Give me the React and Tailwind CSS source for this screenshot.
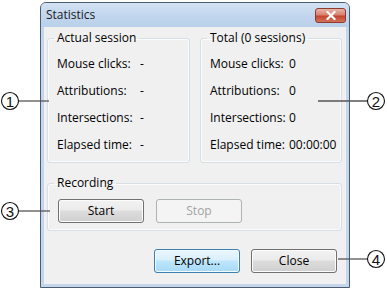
import React from "react";

const btn =
  "w-[86px] h-[24px] rounded-[3px] border text-[12px] leading-none flex items-center justify-center";
const normalBtn =
  "border-[#707070] text-black bg-[linear-gradient(to_bottom,#f2f2f2_0%,#ebebeb_45%,#dddddd_50%,#cfcfcf_100%)] shadow-[inset_0_0_0_1px_#fcfcfc]";

function Group({ title, rows, width, valueCol }) {
  return (
    <fieldset
      className={`${width} border border-[#d5dfe5] rounded-[3px] shadow-[inset_0_0_0_1px_#fafbfc] pl-[9px] pb-[4px]`}
    >
      <legend className="-ml-[3px] px-[3px] leading-[16px] text-black">{title}</legend>
      <div className="pt-[4px] flex flex-col">
        {rows.map(([label, value]) => (
          <div key={label} className="h-[27px] flex items-center">
            <span className={valueCol}>{label}</span>
            <span>{value}</span>
          </div>
        ))}
      </div>
    </fieldset>
  );
}

export default function App() {
  return (
    <div className="relative w-[387px] h-[288px] bg-white overflow-hidden text-[12px] text-black font-['Segoe_UI','Open_Sans',sans-serif]">
      {/* Dialog window */}
      <div className="ml-[40px] mt-[2px] w-[310px] h-[286px] flex flex-col border border-[#4c5c70] rounded-t-[6px] bg-[#c4d6eb]">
        <div className="h-[24px] flex items-center justify-between pl-[5px] pr-[3px] rounded-t-[5px] bg-[linear-gradient(to_bottom,#d3e2f3_0%,#c2d6ed_50%,#b9d0ea_100%)]">
          <span className="text-[12px] text-[#1b1b1b]">Statistics</span>
          <div className="w-[31px] h-[15px] rounded-[3px] border border-[#8d3b2f] bg-[linear-gradient(to_bottom,#e9b3a8_0%,#d9816f_45%,#c4452f_55%,#d4735c_100%)] flex items-center justify-center">
            <svg width="10" height="9" viewBox="0 0 10 9">
              <path d="M1.5 1 L8.5 8 M8.5 1 L1.5 8" stroke="#ffffff" strokeWidth="2.2" strokeLinecap="square" />
            </svg>
          </div>
        </div>

        <div className="flex-1 mx-[3px] mb-[3px] bg-[#f0f0f0] flex flex-col">
          <div className="flex gap-[10px] pl-[3px] pt-[3px]">
            <Group
              title="Actual session"
              width="w-[143px]"
              valueCol="w-[83px]"
              rows={[
                ["Mouse clicks:", "-"],
                ["Attributions:", "-"],
                ["Intersections:", "-"],
                ["Elapsed time:", "-"],
              ]}
            />
            <Group
              title="Total (0 sessions)"
              width="w-[142px]"
              valueCol="w-[79px]"
              rows={[
                ["Mouse clicks:", "0"],
                ["Attributions:", "0"],
                ["Intersections:", "0"],
                ["Elapsed time:", "00:00:00"],
              ]}
            />
          </div>

          <fieldset className="ml-[3px] mt-[12px] w-[295px] border border-[#d5dfe5] rounded-[3px] shadow-[inset_0_0_0_1px_#fafbfc] pl-[10px] pt-[8px] pb-[7px]">
            <legend className="-ml-[4px] px-[3px] leading-[16px]">Recording</legend>
            <div className="flex gap-[12px]">
              <button className={`${btn} ${normalBtn}`}>Start</button>
              <button className={`${btn} border-[#adb2b5] text-[#a3a3a3] bg-[#f4f4f4]`} disabled>
                Stop
              </button>
            </div>
          </fieldset>

          <div className="flex justify-end gap-[11px] pr-[9px] mt-[18px]">
            <button className={`${btn} border-[#3c7fb1] bg-[linear-gradient(to_bottom,#eaf6fd_0%,#d9f0fc_45%,#bee6fd_50%,#a7d9f5_100%)] shadow-[inset_0_0_0_1px_#f4fbff]`}>
              Export...
            </button>
            <button className={`${btn} ${normalBtn}`}>Close</button>
          </div>
        </div>
      </div>

      {/* Callouts */}
      <svg className="absolute inset-0 pointer-events-none" width="387" height="288">
        <g stroke="#555555" strokeWidth="1.3">
          <line x1="18.5" y1="101" x2="49" y2="101" />
          <line x1="318" y1="101" x2="367.5" y2="101" />
          <line x1="18.5" y1="211" x2="50" y2="211" />
          <line x1="338" y1="259" x2="367.5" y2="259" />
        </g>
        <g fill="#ffffff" stroke="#111111" strokeWidth="1.1">
          <circle cx="10" cy="101" r="8.5" />
          <circle cx="376" cy="101" r="8.5" />
          <circle cx="10" cy="211" r="8.5" />
          <circle cx="376" cy="259" r="8.5" />
        </g>
        <g fontFamily="Liberation Sans, Arial, sans-serif" fontSize="15" textAnchor="middle" fill="#111111">
          <text x="10" y="106.5">1</text>
          <text x="376" y="106.5">2</text>
          <text x="10" y="216.5">3</text>
          <text x="376" y="264.5">4</text>
        </g>
      </svg>
    </div>
  );
}
